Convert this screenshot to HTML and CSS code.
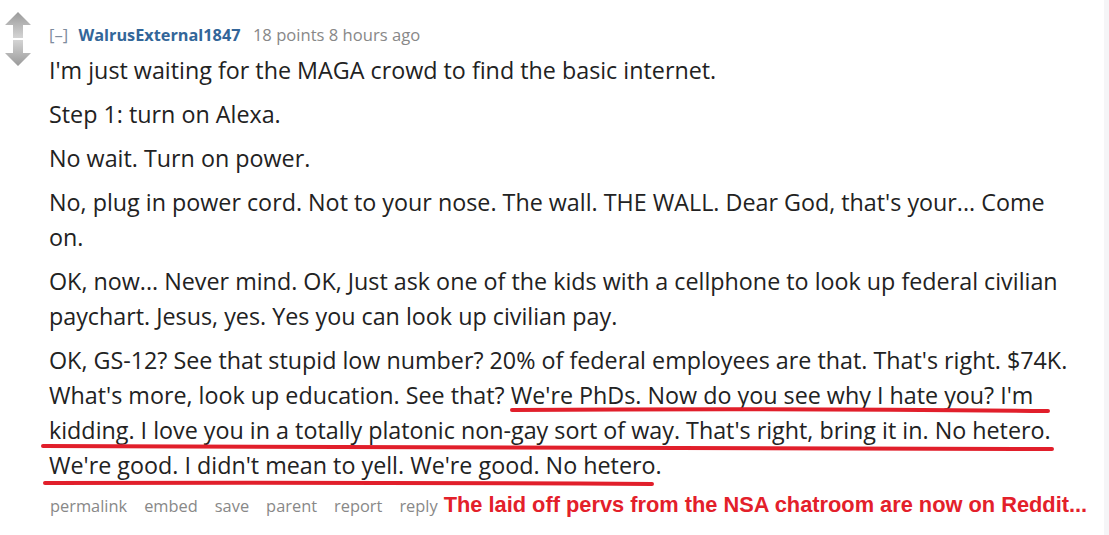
FILE: index.html
```html
<!DOCTYPE html>
<html lang="en">
  <head>
    <meta charset="UTF-8" />
    <title>Comment</title>
    <link rel="stylesheet" href="styles.css">
  </head>
  <body>
    <div class="page">
      <div class="comment">
        <!-- ========== VOTES ========== -->
        <div class="votes">
          <svg class="arrow" width="28" height="26" viewBox="0 0 28 26">
            <defs>
              <linearGradient id="upGrad" x1="0" y1="0" x2="0" y2="1">
                <stop offset="0" stop-color="#9a9a9a" />
                <stop offset="1" stop-color="#d4d4d4" />
              </linearGradient>
            </defs>
            <path d="M14 0 L27 13 L19 13 L19 26 L9 26 L9 13 L1 13 Z" fill="url(#upGrad)" />
          </svg>
          <svg class="arrow" width="28" height="26" viewBox="0 0 28 26">
            <defs>
              <linearGradient id="downGrad" x1="0" y1="0" x2="0" y2="1">
                <stop offset="0" stop-color="#d4d4d4" />
                <stop offset="1" stop-color="#9a9a9a" />
              </linearGradient>
            </defs>
            <path d="M9 0 L19 0 L19 13 L27 13 L14 26 L1 13 L9 13 Z" fill="url(#downGrad)" />
          </svg>
        </div>

        <!-- ========== BODY ========== -->
        <div class="entry">
          <p class="tagline">
            <span class="collapse">[–]</span>
            <a class="author">WalrusExternal1847</a>
            <span class="score">18 points 8 hours ago</span>
          </p>

          <div class="md">
            <p>I'm just waiting for the MAGA crowd to find the basic internet.</p>
            <p>Step 1: turn on Alexa.</p>
            <p>No wait. Turn on power.</p>
            <p>No, plug in power cord. Not to your nose. The wall. THE WALL. Dear God, that's your... Come<br>on.</p>
            <p>OK, now... Never mind. OK, Just ask one of the kids with a cellphone to look up federal civilian<br>paychart. Jesus, yes. Yes you can look up civilian pay.</p>
            <p>OK, GS-12? See that stupid low number? 20% of federal employees are that. That's right. $74K.<br>What's more, look up education. See that? We're PhDs. Now do you see why I hate you? I'm<br>kidding. I love you in a totally platonic non-gay sort of way. That's right, bring it in. No hetero.<br>We're good. I didn't mean to yell. We're good. No hetero.</p>
          </div>

          <ul class="buttons">
            <li>permalink</li>
            <li>embed</li>
            <li>save</li>
            <li>parent</li>
            <li>report</li>
            <li>reply</li>
            <li class="caption">The laid off pervs from the NSA chatroom are now on Reddit...</li>
          </ul>
        </div>

        <!-- ========== MARKER ========== -->
        <svg class="marker" width="1104" height="535" viewBox="0 0 1104 535">
          <path d="M512 410 Q780 408 1048 411" />
          <path d="M43 446 Q550 447 1052 449" />
          <path d="M45 483 Q350 482 652 484" />
        </svg>
      </div>
      <div class="edge"></div>
    </div>
  </body>
</html>
```

FILE: styles.css
```css
* {
  margin: 0;
  padding: 0;
  box-sizing: border-box;
}

body {
  background-color: #fff;
  color: #222;
  font-family: "Open Sans", "Noto Sans", sans-serif;
  overflow: hidden;
}

.page {
  display: flex;
  height: 535px;
}

.comment {
  position: relative;
  display: flex;
  flex-shrink: 0;
  width: 1104px;
  padding-top: 12px;
  overflow: hidden;
}

.edge {
  flex: 1;
  background-color: #f5f5f7;
}

.votes {
  display: flex;
  flex-direction: column;
  flex-shrink: 0;
  gap: 2px;
  width: 49px;
  padding-left: 4px;
}

.entry {
  min-width: 0;
}

.tagline {
  font-size: 16.6px;
  line-height: 20px;
  color: #888;
  padding-top: 13px;
  white-space: nowrap;
}

.collapse {
  color: #7e8c9e;
  margin-right: 6px;
}

.author {
  color: #369;
  font-weight: bold;
  font-size: 16.3px;
  margin-right: 8px;
}

.md {
  padding-top: 8px;
}

.md p {
  font-size: 23.3px;
  line-height: 35px;
  margin-bottom: 9px;
  white-space: nowrap;
}

.buttons {
  list-style: none;
  display: flex;
  align-items: baseline;
  margin-top: 3px;
  white-space: nowrap;
}

.buttons li {
  font-size: 16.4px;
  color: #888;
  margin-right: 16px;
  padding-left: 1px;
}

.buttons .caption {
  font-family: "Liberation Sans", Arial, sans-serif;
  font-weight: bold;
  font-size: 21.8px;
  color: #e3202a;
  margin-left: -11px;
}

.marker {
  position: absolute;
  top: 0;
  left: 0;
  pointer-events: none;
}

.marker path {
  fill: none;
  stroke: #e11f2b;
  stroke-width: 4;
  stroke-linecap: round;
}
```
